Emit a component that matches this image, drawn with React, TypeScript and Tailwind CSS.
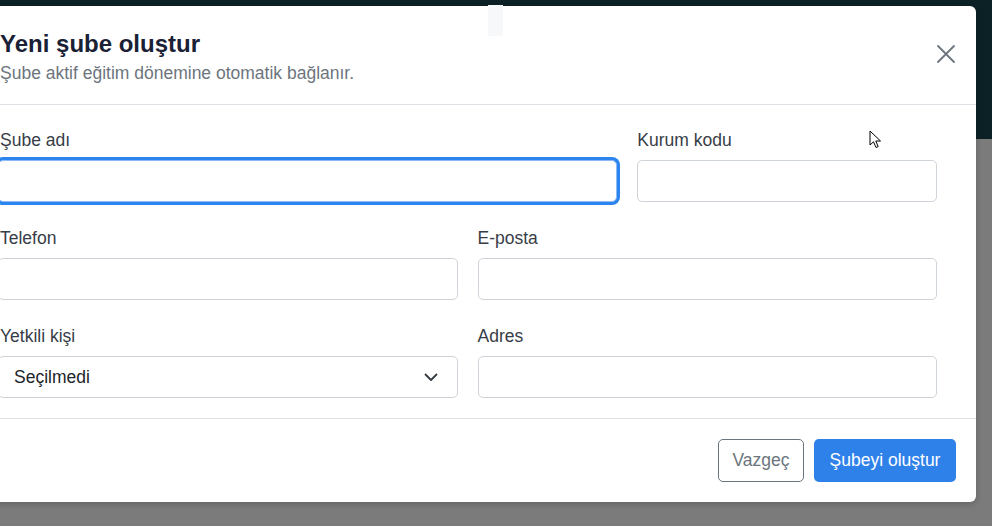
import React from "react";

const font = { fontFamily: '"Liberation Sans", Arial, sans-serif' };

function Label({ children, edge = false }: { children: React.ReactNode; edge?: boolean }) {
  return (
    <div className={"mb-[8px] text-[17.5px] leading-[24px] text-[#373d47] " + (edge ? "pl-[2px]" : "")}>
      {children}
    </div>
  );
}

function Field({ className = "" }: { className?: string }) {
  return <div className={"h-[42px] rounded-[5px] border border-[#cfd4da] bg-white " + className} />;
}

export default function App() {
  return (
    <div className="relative w-[992px] h-[526px] overflow-hidden flex flex-col" style={font}>
      <div className="h-[139px] bg-[#0c2125]" />
      <div className="flex-1 bg-[#7b7b7c]" />

      <div className="absolute left-[-20px] top-[6px] w-[996px] rounded-[6px] bg-white shadow-[0_2px_6px_rgba(0,0,0,0.2)]">
        {/* header */}
        <div className="flex items-start justify-between border-b border-[#dee2e6] px-5 pt-[24px] pb-[19px]">
          <div>
            <div className="text-[24px] leading-[28px] font-bold text-[#1a2035]">Yeni şube oluştur</div>
            <div className="mt-[3px] text-[17.5px] leading-[24px] text-[#6c757d]">
              Şube aktif eğitim dönemine otomatik bağlanır.
            </div>
          </div>
          <svg width="20" height="20" viewBox="0 0 20 20" className="mt-[14px]">
            <path d="M2 2 L18 18 M18 2 L2 18" stroke="#6c757d" strokeWidth="1.8" strokeLinecap="round" />
          </svg>
        </div>

        {/* body */}
        <div className="pl-[18px] pr-[39px] pt-[23px] pb-[20px]">
          <div className="grid grid-cols-6 gap-x-5 gap-y-6">
            <div className="col-span-4">
              <Label edge>Şube adı</Label>
              <div className="h-[42px] rounded-[5px] border border-[#8dbaf6] bg-white ring-[3px] ring-[#2c84ef]" />
            </div>
            <div className="col-span-2">
              <Label>Kurum kodu</Label>
              <Field />
            </div>
            <div className="col-span-3">
              <Label edge>Telefon</Label>
              <Field />
            </div>
            <div className="col-span-3">
              <Label>E-posta</Label>
              <Field />
            </div>
            <div className="col-span-3">
              <Label edge>Yetkili kişi</Label>
              <div className="flex h-[42px] items-center justify-between rounded-[5px] border border-[#cfd4da] bg-white pl-[15px] pr-[19px]">
                <span className="text-[17.5px] text-[#212529]">Seçilmedi</span>
                <svg width="14" height="9" viewBox="0 0 14 9">
                  <path d="M1.5 1.5 L7 7 L12.5 1.5" fill="none" stroke="#343a40" strokeWidth="1.8" strokeLinecap="round" strokeLinejoin="round" />
                </svg>
              </div>
            </div>
            <div className="col-span-3">
              <Label>Adres</Label>
              <Field />
            </div>
          </div>
        </div>

        {/* footer */}
        <div className="flex justify-end gap-[10px] border-t border-[#dee2e6] px-5 pt-[20px] pb-[20px]">
          <button className="h-[43px] w-[86px] rounded-[5px] border border-[#6c757d] bg-white text-[17.5px] text-[#6c757d]">
            Vazgeç
          </button>
          <button className="h-[43px] w-[142px] rounded-[5px] bg-[#2f81ea] text-[17.5px] text-white">
            Şubeyi oluştur
          </button>
        </div>
      </div>

      {/* small light tab near the top */}
      <div className="absolute left-[488px] top-[5px] h-[31px] w-[15px] bg-[#f7f8f9]" />

      {/* mouse cursor */}
      <svg className="absolute left-[869px] top-[130px]" width="14" height="20" viewBox="0 0 14 20">
        <path d="M1 1 L1 15 L4.5 11.8 L7 17.5 L9.2 16.6 L6.8 11 L11.5 11 Z" fill="#fff" stroke="#000" strokeWidth="1" strokeLinejoin="round" />
      </svg>
    </div>
  );
}
